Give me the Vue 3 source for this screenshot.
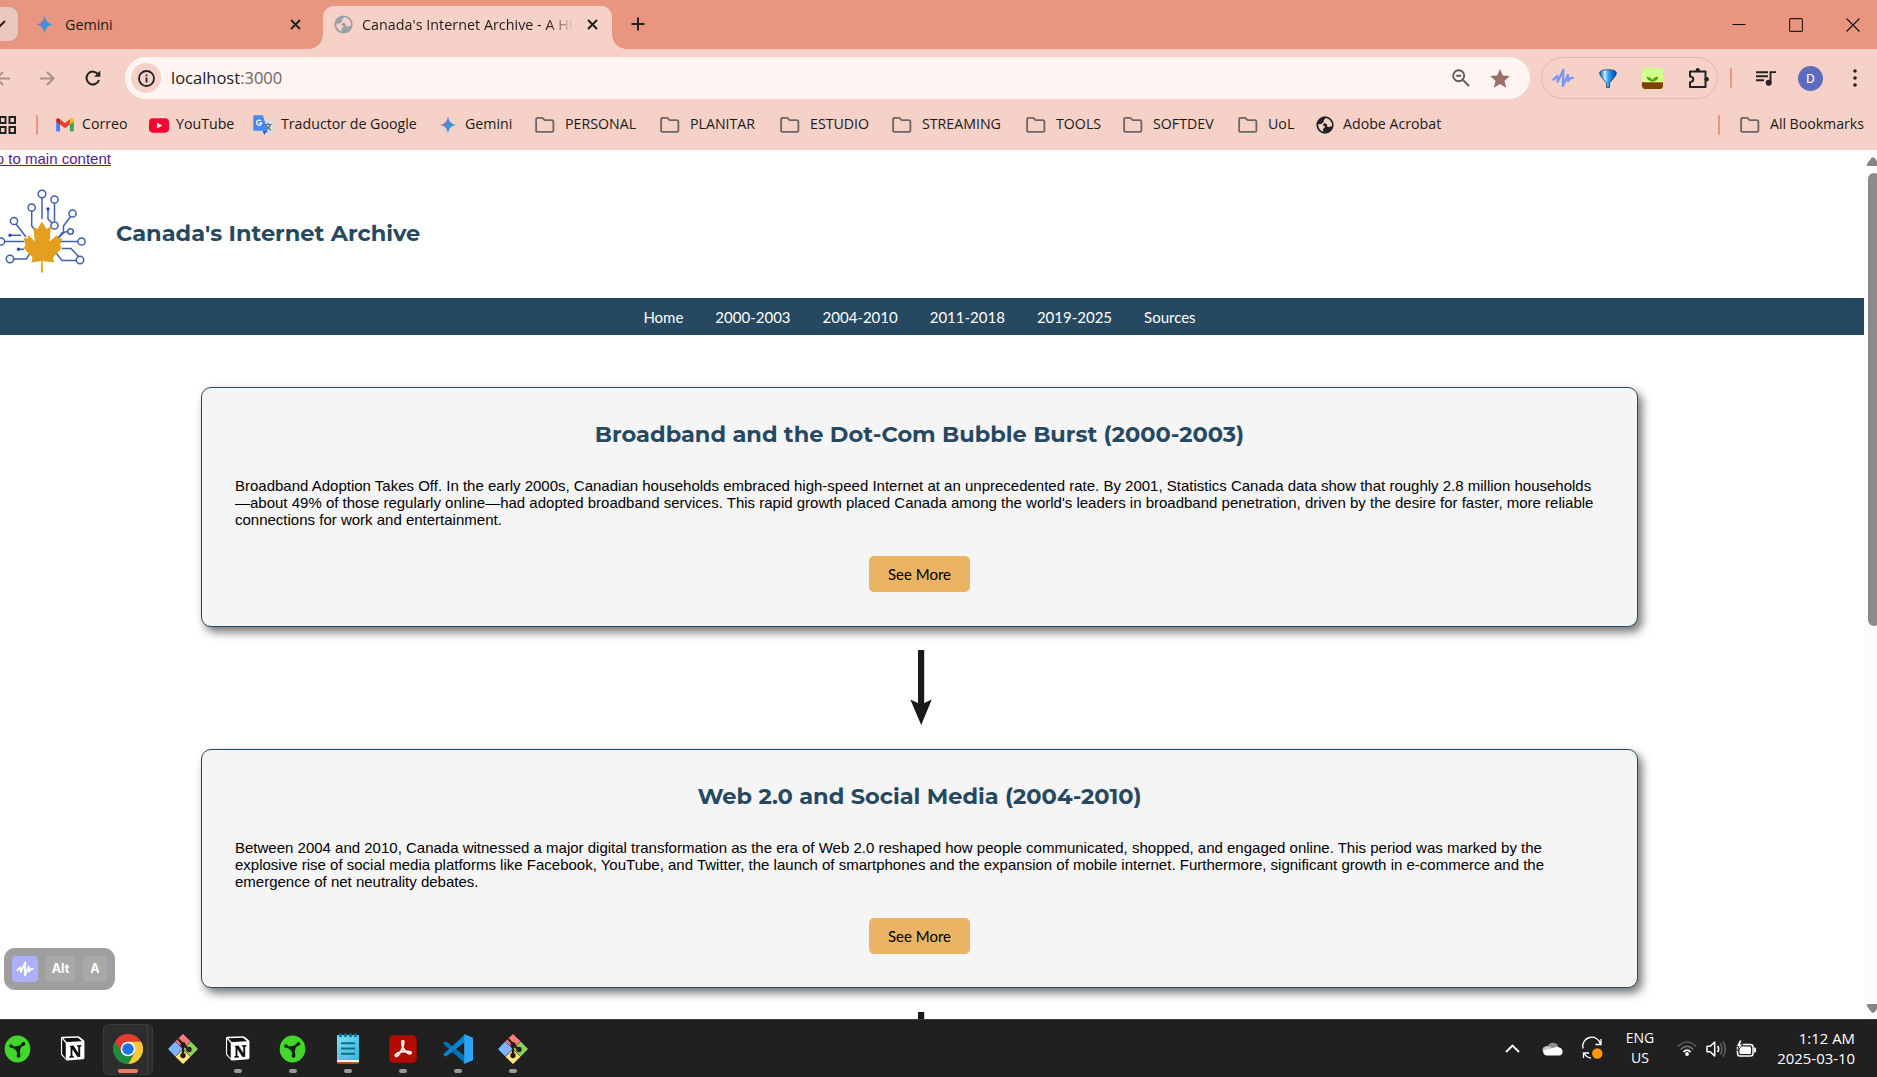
<script setup>
const bookmarks = [
  { icon: 'gmail', label: 'Correo', w: 93, gap: 8 },
  { icon: 'youtube', label: 'YouTube', w: 104, gap: 7 },
  { icon: 'translate', label: 'Traductor de Google', w: 187, gap: 7 },
  { icon: 'gemini', label: 'Gemini', w: 95, gap: 9 },
  { icon: 'folder', label: 'PERSONAL', w: 125, gap: 10 },
  { icon: 'folder', label: 'PLANITAR', w: 120, gap: 10 },
  { icon: 'folder', label: 'ESTUDIO', w: 112, gap: 10 },
  { icon: 'folder', label: 'STREAMING', w: 134, gap: 10 },
  { icon: 'folder', label: 'TOOLS', w: 97, gap: 10 },
  { icon: 'folder', label: 'SOFTDEV', w: 115, gap: 10 },
  { icon: 'folder', label: 'UoL', w: 78, gap: 10 },
  { icon: 'globe', label: 'Adobe Acrobat', w: 128, gap: 9 },
]

const navLinks = ['Home', '2000-2003', '2004-2010', '2011-2018', '2019-2025', 'Sources']

const eras = [
  {
    title: 'Broadband and the Dot-Com Bubble Burst (2000-2003)',
    text: "Broadband Adoption Takes Off. In the early 2000s, Canadian households embraced high-speed Internet at an unprecedented rate. By 2001, Statistics Canada data show that roughly 2.8 million households—about 49% of those regularly online—had adopted broadband services. This rapid growth placed Canada among the world's leaders in broadband penetration, driven by the desire for faster, more reliable connections for work and entertainment.",
  },
  {
    title: 'Web 2.0 and Social Media (2004-2010)',
    text: 'Between 2004 and 2010, Canada witnessed a major digital transformation as the era of Web 2.0 reshaped how people communicated, shopped, and engaged online. This period was marked by the explosive rise of social media platforms like Facebook, YouTube, and Twitter, the launch of smartphones and the expansion of mobile internet. Furthermore, significant growth in e-commerce and the emergence of net neutrality debates.',
  },
]

const apps = [
  { icon: 'razer' },
  { icon: 'notion' },
  { icon: 'chrome', active: true },
  { icon: 'git' },
  { icon: 'notion', open: true },
  { icon: 'razer', open: true },
  { icon: 'notepad', open: true },
  { icon: 'acrobat', open: true },
  { icon: 'vscode', open: true },
  { icon: 'git', open: true },
]
</script>

<template>
  <div class="screen">
    <svg class="defs" width="0" height="0" aria-hidden="true">
      <defs>
        <linearGradient id="gem" x1="0" y1="0.3" x2="1" y2="0.6">
          <stop offset="0" stop-color="#c56a9a" />
          <stop offset="0.35" stop-color="#6680cc" />
          <stop offset="0.7" stop-color="#279bdc" />
          <stop offset="1" stop-color="#3fa9dd" />
        </linearGradient>
        <linearGradient id="para" x1="0" y1="0" x2="1" y2="0">
          <stop offset="0" stop-color="#0a56a4" />
          <stop offset="0.32" stop-color="#c4efff" />
          <stop offset="0.5" stop-color="#3aa8f0" />
          <stop offset="0.75" stop-color="#0878d8" />
          <stop offset="1" stop-color="#083f82" />
        </linearGradient>
        <linearGradient id="grass" x1="0" y1="0" x2="0" y2="1">
          <stop offset="0" stop-color="#c8ff8c" />
          <stop offset="1" stop-color="#f4ff8a" />
        </linearGradient>
        <linearGradient id="pad" x1="0" y1="0" x2="1" y2="1">
          <stop offset="0" stop-color="#7fe0f5" />
          <stop offset="1" stop-color="#35b4d8" />
        </linearGradient>
        <symbol id="i-gemini" viewBox="0 0 18 20">
          <path fill="url(#gem)" d="M9 0c.7 5.600 3.500 9.200 9 10-5.500.8-8.300 4.400-9 10-.7-5.600-3.500-9.200-9-10 5.500-.8 8.300-4.400 9-10z" />
        </symbol>
        <symbol id="i-globe" viewBox="0 0 20 20">
          <circle cx="10" cy="10" r="9.600" fill="currentColor" />
          <path d="M11 2.200 8.500 4.700l.3 1.700-3 2.600-3.500.2c0 3.900 2 7 5.400 8.200l.2-3.300 2-1.200-.4-1.800-2.300-.9 2.400-2.300 2.800 1.600-.3 2.200 2.900.9 1.700-1.500 1.200.2c.5-4.500-2.600-8.200-6.900-9.100z" />
        </symbol>
        <symbol id="i-folder" viewBox="0 0 21 18">
          <path fill="none" stroke="#6b6769" stroke-width="1.900" stroke-linejoin="round" d="M1.200 15V3q0-1.500 1.500-1.500h5l2.400 2.400h7.500q1.700 0 1.700 1.700V15q0 1.300-1.500 1.300H2.700Q1.200 16.300 1.200 15z" />
        </symbol>
        <symbol id="i-gmail" viewBox="0 0 20 15">
          <path fill="#4285f4" d="M.2 3.500 4.500 6v8.800H1.600Q.2 14.800.2 13.400z" />
          <path fill="#34a853" d="M15.500 6l4.300-3v10.400q0 1.400-1.400 1.400h-2.900z" />
          <path fill="#fbbc04" d="M15.500 1.200l1-.8c1.500-1 3.300-.1 3.300 1.600v1.700l-4.300 3.200z" />
          <path fill="#c5221f" d="M.2 3.700V2C.2.300 2-.6 3.500.4l1 .8v5.700z" />
          <path fill="#ea4335" d="M4.500 1.200 10 5.400l5.500-4.200v5.700L10 11 4.500 6.900z" />
        </symbol>
        <symbol id="i-youtube" viewBox="0 0 21 15">
          <rect width="21" height="15" rx="4" fill="#ff0033" />
          <path fill="#fff" d="M8.300 4.400v6.200l5.600-3.100z" />
        </symbol>
        <symbol id="i-translate" viewBox="0 0 21 20">
          <rect x="8" y="4.500" width="12.500" height="15" rx="1" fill="#dadce0" />
          <path fill="none" stroke="#5f7078" stroke-width="1.200" d="M11.500 9.500h7M15 8v1.500M17.500 9.500c-.8 2.500-2.500 4.200-5 5.500M13 10c.8 2.200 2.700 4 5 5.200" />
          <path fill="#4687f4" d="M1.300.3h8.500l5 15.500H1.300Q.3 15.800.3 14.800V1.300Q.3.300 1.300.3z" />
          <path fill="#3a5bc7" d="M9.500 15.800h5.300l-3.600 4z" />
          <path fill="none" stroke="#fff" stroke-width="1.300" d="M8 6a2.500 2.500 0 1 0 .6 2.200H6.200" />
        </symbol>
        <symbol id="i-wave" viewBox="0 0 22 20">
          <path fill="none" stroke="currentColor" stroke-width="2.300" stroke-linecap="round" stroke-linejoin="round" d="M1.300 11.600 5.300 8l.4 5.800L11.400 1.800l-.6 16.200 5-11 .2 6 2.300-2.800 2.500-.3" />
        </symbol>
        <symbol id="i-razer" viewBox="0 0 28 28">
          <ellipse cx="14" cy="14" rx="13.300" ry="14" fill="#43d62c" />
          <path fill="#10240d" d="M6 9.500q3 2.300 6 1.600 4.500 0 7-3.600l2.500 1.800q-3.800 2.200-4.700 5-.8 3 .2 5.700l-3.400 1q.3-3.700-1.300-5.500-2.200-2.600-6.300-3.800z" />
          <circle cx="7.300" cy="11" r="1.900" fill="#10240d" /><circle cx="20.200" cy="8.600" r="1.900" fill="#10240d" /><circle cx="15.100" cy="21" r="2" fill="#10240d" />
        </symbol>
        <symbol id="i-notion" viewBox="0 0 26 26">
          <path fill="#fff" d="M1 2.300Q1 1 2.300.9L18.500.2q1 0 1.800.6l4.200 3.400q.9.700.9 1.800v16.500q0 1.500-1.500 1.600L8 25.500q-1.300.1-2-.9L1.600 20Q1 19.300 1 18.400z" />
          <path fill="#111" d="M2.200 3v15.200q0 .6.400 1L6 23.500V7.500L2.300 3.200zM3.300 2.400l3.400 3.500q.5.500 1.200.4L23 5.400l-3.700-3.100q-.4-.4-1-.4z" />
          <path fill="#fff" d="M7.300 7.600 24 6.700v16L7.300 23.900z" />
          <path fill="#111" d="M9.700 10.300l4.300-.3 5 7.600v-6.300l-1.400-.3V9.600l4.700-.3v1.400l-1.300.5v10.500l-2.800.2-5.300-8.200v6.800l1.500.5v1.300l-4.700.2v-1.300l1.300-.6v-9z" />
        </symbol>
        <symbol id="i-chrome" viewBox="0 0 30 30">
          <path fill="#e33b2e" d="M2 7.500A15 15 0 0 1 28 7.500H15L8.500 18.800z" />
          <path fill="#fcc934" d="M28 7.500A15 15 0 0 1 15 30l6.500-11.300L15 7.500z" />
          <path fill="#1e8e3e" d="M2 7.500A15 15 0 0 0 15 30l6.500-11.200H8.500z" />
          <circle cx="15" cy="15" r="7.300" fill="#fff" /><circle cx="15" cy="15" r="5.800" fill="#1a73e8" />
        </symbol>
        <symbol id="i-git" viewBox="0 0 30 30">
          <path fill="#ff7b7b" d="M15 0l7.500 7.200-7.500 7.300-7.500-7.300z" /><path fill="#80b3ff" d="M7.300 7.500l7.400 7.500-7.400 7.500L0 15z" />
          <path fill="#87d65a" d="M22.700 7.500 30 15l-7.300 7.500-7.400-7.500z" /><path fill="#ffe680" d="M15 15.500l7.500 7.300L15 30l-7.500-7.200z" />
          <g stroke="#2a1b17" stroke-width="2.200" fill="none"><path d="M10 5l5 5v12M15 10l6 6" /></g>
          <circle cx="15" cy="10.500" r="2.600" fill="#2a1b17" /><circle cx="15" cy="21.500" r="2.700" fill="#2a1b17" /><circle cx="21" cy="15.500" r="2.700" fill="#2a1b17" />
        </symbol>
        <symbol id="i-notepad" viewBox="0 0 22 31">
          <rect y="24" width="22" height="6.800" rx="1.200" fill="#b6620f" /><rect y="24" width="22" height="5" fill="#f4f4f4" />
          <rect y="2" width="22" height="25" rx="1" fill="url(#pad)" />
          <path stroke="#0e6a8c" stroke-width="1.900" d="M4 10.300h14M4 15.500h14M4 20.700h14" />
          <path stroke="#0c7595" stroke-width="3" stroke-linecap="round" d="M3.500 1.700v1M8.500 1.700v1M13.500 1.700v1M18.500 1.700v1" />
        </symbol>
        <symbol id="i-acrobat" viewBox="0 0 28 28">
          <rect x=".3" y=".3" width="27.400" height="27.400" rx="4.500" fill="#b30b00" />
          <path fill="none" stroke="#fff" stroke-width="1.700" stroke-linejoin="round" d="M13.600 5.800c-1.600.4-.9 4.200.5 7 1.800 3.600 5 6.500 7.200 5.900 2-.6.700-2.500-3.800-2.300-4.300.1-9.600 1.400-10.900 3.300-.9 1.400.6 2.400 2.200.9 2.500-2.400 4.900-7.700 5.700-11.300.6-2.600.2-3.800-.9-3.500z" />
        </symbol>
        <symbol id="i-vscode" viewBox="0 0 30 30">
          <path fill="#0073b7" d="M0 9.500 2 7.800q.7-.5 1.400 0L22 22v7.500z" />
          <path fill="#0a84cf" d="M0 20.500 2 22.200q.7.500 1.400 0L22 8V.5z" />
          <path fill="#2aa4f4" d="M21.500.2 30 3.800v22.400l-8.500 3.600q-.8.200-1.200-.3.900.3.900-.8V1.300q0-1.100-.9-.8.400-.5 1.200-.3z" />
        </symbol>
      </defs>
    </svg>

    <header class="browser">
      <div class="tabstrip">
        <div class="tabsearch"><svg width="12" height="8" viewBox="0 0 12 8"><path d="M1 1l5 5 5-5" fill="none" stroke="#222" stroke-width="2" /></svg></div>
        <div class="tab idle">
          <svg width="17" height="21"><use href="#i-gemini" /></svg>
          <span class="tabname">Gemini</span>
          <svg class="x" width="11" height="11" viewBox="0 0 11 11"><path d="M1 1l9 9M10 1l-9 9" stroke="#222" stroke-width="2" /></svg>
        </div>
        <div class="tab live">
          <svg class="fav" width="19" height="19"><use href="#i-globe" /></svg>
          <span class="tabname fade">Canada's Internet Archive - A Hi</span>
          <svg class="x" width="11" height="11" viewBox="0 0 11 11"><path d="M1 1l9 9M10 1l-9 9" stroke="#222" stroke-width="2" /></svg>
        </div>
        <svg class="plus" width="14" height="14" viewBox="0 0 14 14"><path d="M7 .5v13M.5 7h13" stroke="#222" stroke-width="2" /></svg>
        <div class="winctl">
          <svg width="14" height="14" viewBox="0 0 14 14"><path d="M.5 6.500h13" stroke="#111" /></svg>
          <svg width="14" height="14" viewBox="0 0 14 14"><rect x=".6" y=".6" width="12.800" height="12.800" rx="1" fill="none" stroke="#2b1c18" stroke-width="1.100" /></svg>
          <svg width="14" height="14" viewBox="0 0 14 14"><path d="M.5.5l13 13M13.500.5l-13 13" stroke="#111" stroke-width="1.100" /></svg>
        </div>
      </div>

      <div class="toolbar">
        <svg class="back" width="15" height="15" viewBox="0 0 15 15"><path d="M15 7.500H1.500M8 1 1.500 7.500 8 14" fill="none" stroke="#a88f89" stroke-width="1.900" /></svg>
        <svg class="fwd" width="15" height="15" viewBox="0 0 15 15"><path d="M0 7.500h13.500M7 1l6.500 6.500L7 14" fill="none" stroke="#a88f89" stroke-width="1.900" /></svg>
        <svg class="reload" width="16" height="16" viewBox="0 0 16 16"><path d="M14 10a6.400 6.400 0 1 1-.8-5.600" fill="none" stroke="#222" stroke-width="2" /><path d="M15.300.6v6.200H9.200z" fill="#222" /></svg>
        <div class="omnibox">
          <span class="info"><svg width="17" height="17" viewBox="0 0 17 17"><circle cx="8.500" cy="8.500" r="7.500" fill="none" stroke="#222" stroke-width="1.800" /><path d="M8.500 7.500v5M8.500 4.400v1.900" stroke="#222" stroke-width="1.800" /></svg></span>
          <span class="url">localhost<i>:3000</i></span>
          <svg class="lens" width="18" height="18" viewBox="0 0 18 18"><circle cx="6.700" cy="6.700" r="5.500" fill="none" stroke="#5f5755" stroke-width="1.900" /><path d="M4.200 6.700h5M10.800 10.800l6.200 6.200" stroke="#5f5755" stroke-width="1.900" /></svg>
          <svg class="star" width="20" height="19" viewBox="0 0 20 19"><path fill="#9a6f68" d="M10 0l2.800 6.500 7.100.6-5.400 4.700 1.600 7L10 15.100 3.900 18.800l1.600-7L.1 7.100l7.100-.6z" /></svg>
        </div>
        <div class="exts">
          <svg class="wave" width="22" height="20"><use href="#i-wave" /></svg>
          <svg width="18" height="19" viewBox="0 0 18 19"><path fill="url(#para)" stroke="#0b4180" stroke-width=".8" d="M.6 4Q1 .8 9 .7T17.400 4q0 2-3 5.500L10.500 14v4.500h-3V14L3.600 9.500Q.6 6 .6 4z" /></svg>
          <svg width="21" height="21" viewBox="0 0 21 21"><rect width="21" height="21" rx="3.500" fill="url(#grass)" /><path fill="#7a4400" d="M0 14.300h21v3.200Q21 21 17.500 21h-14Q0 21 0 17.500z" /><path fill="#48a80e" d="M10.500 13.800Q5 12.500 4.500 9q4.500-.2 6 3 1.500-3.500 6-3.300Q16 12.500 10.500 13.800z" /></svg>
          <svg width="21" height="21" viewBox="0 0 21 21"><path fill="none" stroke="#222" stroke-width="2" stroke-linejoin="round" d="M2 3.500h15.500V19H2v-4.800q3.300-.3 3.300-2.900T2 8.400z" /><circle cx="9.800" cy="2.200" r="2.100" fill="#222" /><circle cx="18.700" cy="11.300" r="2.200" fill="#222" /></svg>
        </div>
        <span class="sep s1"></span>
        <svg class="music" width="20" height="15" viewBox="0 0 20 15"><path d="M0 1.200h12M0 5.200h12M0 9.200h8M14.500 12V1.100H20" fill="none" stroke="#222" stroke-width="1.900" /><circle cx="12.700" cy="11.800" r="3" fill="#222" /></svg>
        <span class="avatar">D</span>
        <svg class="dots" width="4" height="18" viewBox="0 0 4 18"><circle cx="2" cy="2" r="1.800" fill="#222" /><circle cx="2" cy="9" r="1.800" fill="#222" /><circle cx="2" cy="16" r="1.800" fill="#222" /></svg>
      </div>

      <div class="bookmarks">
        <svg class="grid" width="17" height="18" viewBox="0 0 17 18"><g fill="none" stroke="#222" stroke-width="2"><rect x="1" y="1" width="5.500" height="6" /><rect x="10.500" y="1" width="5.500" height="6" /><rect x="1" y="11" width="5.500" height="6" /><rect x="10.500" y="11" width="5.500" height="6" /></g></svg>
        <span class="sep s2"></span>
        <a v-for="b in bookmarks" :key="b.label" class="bm" :style="{ width: b.w + 'px', columnGap: b.gap + 'px' }">
          <svg :class="['bi', b.icon]"><use :href="'#i-' + b.icon" /></svg><span>{{ b.label }}</span>
        </a>
        <span class="sep s3"></span>
        <a class="bm all"><svg class="bi folder"><use href="#i-folder" /></svg><span>All Bookmarks</span></a>
      </div>
    </header>

    <div class="viewport">
      <main class="page">
        <a class="skip" href="#main">Skip to main content</a>
        <div class="brand">
          <svg class="logo" width="87" height="90" viewBox="0 0 87 90">
            <g fill="none" stroke="#3f5fae" stroke-width="1.500">
              <circle cx="42" cy="9" r="3.800" /><path d="M42 13v21" />
              <circle cx="54.500" cy="14.500" r="3.600" /><path d="M54.500 18v18" />
              <circle cx="54.500" cy="40.500" r="3.600" /><path d="M48 24v10l4.500 4.500" />
              <circle cx="31.700" cy="22.500" r="3.600" /><path d="M31.700 26v15l4 5" />
              <circle cx="14" cy="36" r="3.600" /><path d="M16 39l10 13" />
              <circle cx="72.500" cy="28.500" r="3.600" /><path d="M70.500 31.500 63.500 41v7L57 54" />
              <circle cx="70.500" cy="46.500" r="2.800" /><path d="M67.500 46.500 62 48l-4 5" />
              <circle cx="81.500" cy="56.500" r="3.600" /><path d="M60 56.500h18" />
              <circle cx="1" cy="56.500" r="3.600" /><path d="M5 56.500h19M10 50.200h11M19 64.300h5" />
              <circle cx="10" cy="74" r="3.700" /><path d="M14 74h12.500L30 68" />
              <circle cx="80" cy="75" r="3.700" /><path d="M76.500 75.500H62L56 68M62 63.500h9L79 72" />
            </g>
            <g fill="#2e4fa3"><circle cx="48" cy="24" r="1.700" /><circle cx="10" cy="50.200" r="1.700" /><circle cx="18.500" cy="64.300" r="1.700" /></g>
            <path fill="#e39f1d" d="M42 36.500l4.500 7.500 4.500-2.500-1.500 15 7.500-6.500 1 3.500 4-.5-2 7.500 2 2.500-9 9.500 1 5-11.300-1.500.3 11.500h-2l.3-11.500L31.500 77.500l1-5-9-9.500 2-2.500-2-7.500 4 .5 1-3.500 6.500 6.500-2-15L37.500 44z" />
          </svg>
          <h1>Canada's Internet Archive</h1>
        </div>
        <nav><a v-for="n in navLinks" :key="n">{{ n }}</a></nav>
        <div class="timeline">
          <template v-for="era in eras" :key="era.title">
            <section class="card">
              <h2>{{ era.title }}</h2>
              <p>{{ era.text }}</p>
              <button>See More</button>
            </section>
            <svg class="arrow" width="22" height="75" viewBox="0 0 22 75"><path fill="#19191b" d="M8 0h6.200v53l7.600-3.500L11.200 75 .3 49.500 8 53z" /></svg>
          </template>
        </div>
      </main>
      <aside class="scroll">
        <svg width="14" height="9" viewBox="0 0 14 9"><path fill="#858585" d="M5.500.8q1.500-1.300 3 0L13 7q.7 2-1 2H2Q.3 9 1 7z" /></svg>
        <div class="thumb"></div>
        <svg class="dn" width="14" height="9" viewBox="0 0 14 9"><path fill="#858585" d="M5.500 8.200q1.500 1.300 3 0L13 2q.7-2-1-2H2Q.3 0 1 2z" /></svg>
      </aside>
      <div class="hotkey">
        <span class="key on"><svg width="20" height="16" viewBox="0 0 22 20"><use href="#i-wave" /></svg></span>
        <span class="key alt">Alt</span>
        <span class="key">A</span>
      </div>
    </div>

    <footer class="taskbar">
      <div class="apps">
        <div v-for="(a, i) in apps" :key="i" :class="['app', { active: a.active }]">
          <svg :class="['ai', a.icon]"><use :href="'#i-' + a.icon" /></svg>
          <span v-if="a.open || a.active" class="pill"></span>
        </div>
      </div>
      <div class="tray">
        <svg class="chev" width="15" height="9" viewBox="0 0 15 9"><path d="M1 8l6.500-6.500L14 8" fill="none" stroke="#fff" stroke-width="1.900" /></svg>
        <svg class="cloud" width="21" height="14" viewBox="0 0 21 14"><path fill="#8f8f8f" d="M5 9Q4.500 1 11 .8q5 .2 5.500 5z" /><path fill="#c4c4c4" d="M.5 9Q0 4.500 5 4q3-.2 6 2.500l-6 5z" /><path fill="#fff" d="M1 9.500q1-2 4-2l6-1.500q3-1.500 5.500-.7Q20.500 6 20.600 9.500 20.500 13.300 17 13.500H4.500Q1.500 13 1 9.500z" /></svg>
        <svg class="sync" width="21" height="22" viewBox="0 0 21 22"><path d="M1 10.500A9 9 0 0 1 18.500 6M19 1v5.500h-5.500M1.500 20v-5H7M2 15q2 4.500 7 5" fill="none" stroke="#fff" stroke-width="1.300" /><circle cx="15.300" cy="15.500" r="5.200" fill="#ff9800" /></svg>
        <div class="lang"><span>ENG</span><span>US</span></div>
        <svg class="wifi" width="20" height="15" viewBox="0 0 20 15"><g fill="none" stroke-width="1.400"><path stroke="#5a5a5a" d="M.8 5.600Q10-3.600 19.200 5.600" /><path stroke="#777" d="M3.700 8.500Q10 2 16.300 8.500" /><path stroke="#fff" stroke-width="1.700" d="M6.300 11q3.700-3.700 7.400 0" /></g><circle cx="10" cy="13" r="1.900" fill="#fff" /></svg>
        <svg class="vol" width="21" height="18" viewBox="0 0 21 18"><path fill="none" stroke="#fff" stroke-width="1.500" stroke-linejoin="round" d="M1 6.300h3.200L8.700 2v14l-4.500-4.300H1zM11.700 5.800q2 3.200 0 6.400" /><path fill="none" stroke="#666" stroke-width="1.400" d="M14.200 3.500q3.600 5.500 0 11M16.800 1.300q5 7.700 0 15.400" /></svg>
        <svg class="bat" width="21" height="18" viewBox="0 0 21 18"><rect x="1.500" y="4.500" width="15.500" height="11.500" rx="2.500" fill="none" stroke="#fff" stroke-width="1.500" /><rect x="3.500" y="6.500" width="11.500" height="7.500" rx="1" fill="#fff" /><path fill="#fff" d="M18 7.500h1.300q.9 1 .9 2.500t-.9 2.500H18z" /><path fill="#fff" stroke="#202020" stroke-width=".9" d="M3.500 0 .3 6.500h2.400L1.600 11 6.800 4.300H4.500L6 0z" /></svg>
        <div class="clock"><span>1:12 AM</span><span>2025-03-10</span></div>
      </div>
    </footer>
  </div>
</template>

<style>
body { margin: 0; }
</style>

<style scoped>
.screen { width: 1877px; height: 1077px; overflow: hidden; display: flex; flex-direction: column; background: #fff; font-family: "Open Sans", "Noto Sans", sans-serif; color: #201b1a; }
.defs { position: absolute; }
svg { display: block; flex: none; overflow: visible; }
.browser { flex: none; height: 150px; background: #f5d1c8; }

.tabstrip { height: 49px; background: #e8967f; display: flex; align-items: flex-start; }
.tabsearch { width: 18px; height: 34px; margin-top: 7px; background: #e9c6be; border-radius: 0 9px 9px 0; display: flex; align-items: center; }
.tabsearch svg { margin-left: -6px; }
.tab { display: flex; align-items: center; font-size: 14.300px; box-sizing: border-box; }
.idle { width: 305px; height: 36px; margin-top: 6px; padding: 0 22.500px 0 18px; }
.idle .tabname { margin-left: 12px; flex: 1; }
.live { width: 289px; height: 43px; margin-top: 6px; padding: 0 14px 6px 11px; background: #f5d1c8; border-radius: 11px 11px 0 0; position: relative; }
.live::before, .live::after { content: ""; position: absolute; bottom: 0; width: 14px; height: 14px; }
.live::before { left: -14px; background: radial-gradient(circle at 0 0, transparent 13.500px, #f5d1c8 14px); }
.live::after { right: -14px; background: radial-gradient(circle at 100% 0, transparent 13.500px, #f5d1c8 14px); }
.tabname { white-space: nowrap; }
.fade { width: 210px; margin-left: 9px; margin-right: 15px; letter-spacing: .03px; -webkit-mask-image: linear-gradient(90deg, #000 185px, transparent 212px); mask-image: linear-gradient(90deg, #000 185px, transparent 212px); }
.fav { color: #98a1a7; fill: #f5d1c8; }
.globe { fill: #f5d1c8; color: #202124; }
.plus { margin: 17px 0 0 19px; }
.winctl { margin: 18px 17px 0 auto; display: flex; gap: 43px; }

.toolbar { height: 58px; display: flex; align-items: center; }
.back { margin-left: -5px; }
.fwd { margin-left: 30px; }
.reload { margin-left: 30px; }
.omnibox { margin-left: 24px; width: 1405px; height: 42px; border-radius: 21px; background: #fff4f2; display: flex; align-items: center; box-sizing: border-box; padding-left: 6px; }
.info { width: 30px; height: 30px; border-radius: 50%; background: #f5d1c8; display: flex; align-items: center; justify-content: center; }
.url { font-size: 16.500px; margin-left: 10px; flex: 1; padding-bottom: 1px; }
.url i { font-style: normal; color: #6f6563; }
.lens { margin-right: 20px; }
.star { margin-right: 20px; }
.exts { margin-left: 11px; width: 177px; height: 42px; box-sizing: border-box; border: 1px solid #e3bcb3; border-radius: 21px; display: flex; align-items: center; padding-left: 10px; }
.exts svg + svg { margin-left: 25px; }
.wave { color: #7b96f5; }
.sep { width: 2px; height: 20px; border-radius: 1px; background: #e8967f; }
.s1 { margin-left: 12px; }
.music { margin-left: 24px; }
.avatar { width: 25px; height: 25px; border-radius: 50%; background: #5c6bc0; color: #fff; font: 13.500px/25px Roboto, sans-serif; text-align: center; margin-left: 22px; }
.dots { margin-left: 30px; }

.bookmarks { height: 36px; display: flex; align-items: center; font-size: 14.200px; }
.grid { margin-left: -1px; }
.s2 { margin: 0 18px 0 20px; }
.bm { display: flex; align-items: center; white-space: nowrap; flex: none; }
.bm span { line-height: 18px; padding-bottom: 2px; }
.bi { width: 20px; height: 18px; }
.bi.gmail { width: 18px; height: 14px; }
.bi.youtube { width: 20px; height: 15px; }
.bi.translate { width: 21px; height: 20px; }
.bi.gemini { width: 16px; height: 18px; }
.bi.globe { width: 18px; height: 18px; }
.s3 { margin-left: auto; margin-right: 20px; }
.all { width: 137px; column-gap: 10px; letter-spacing: -.05px; }

.viewport { position: relative; height: 869px; display: flex; overflow: hidden; font-family: "Liberation Sans", Arial, sans-serif; }
.page { width: 1889px; margin-left: -25px; height: 869px; flex: none; overflow: hidden; }
.skip { display: block; height: 17px; font-size: 15px; line-height: 17px; color: #551a8b; text-decoration: underline; }
.brand { display: flex; height: 131px; padding-left: 25px; }
.logo { margin-top: 18px; }
h1, h2 { margin: 0; color: #264961; font: bold 22.500px/28px Montserrat, Inter, sans-serif; }
h1 { margin: 52px 0 0 29px; }
nav { height: 37px; background: #264961; color: #fff; display: flex; justify-content: center; align-items: center; gap: 32px; font: 15px/18px Lato, sans-serif; }
.timeline { display: flex; flex-direction: column; align-items: center; padding-top: 52px; }
.card { width: 1437px; height: 239.500px; flex: none; box-sizing: border-box; border: 1px solid #264961; border-radius: 10px; background: #f5f5f5; box-shadow: 4px 5px 10px rgba(0, 0, 0, .55); padding: 32px 33px 0; display: flex; flex-direction: column; align-items: center; }
.card p { margin: 29px 0 0; align-self: stretch; font-size: 15px; line-height: 17px; color: #000; }
button { margin-top: 28px; width: 101px; height: 36px; padding: 0; border: 0; border-radius: 5px; background: #eab464; color: #000; font: 15px/18px Lato, sans-serif; }
.arrow { margin: 23.500px 0 23.700px 3px; }

.scroll { position: absolute; right: 0; top: 0; width: 13px; height: 869px; background: #fcfcfc; display: flex; flex-direction: column; overflow: hidden; }
.scroll svg { margin: 7px 0 0 2px; }
.thumb { width: 12px; height: 453px; margin: 7px 0 0 4px; border-radius: 6px; background: #8b8b8b; flex: none; }
.scroll .dn { margin-top: auto; margin-bottom: 6px; }

.hotkey { position: absolute; left: 4px; top: 798px; width: 111px; height: 42px; border-radius: 11px; background: #9f9f9f; display: flex; align-items: center; box-sizing: border-box; padding-left: 8px; gap: 8px; }
.key { width: 24px; height: 26px; border-radius: 4px; background: #a8a8a8; color: #fff; font: bold 12.500px/26px Inter, sans-serif; display: flex; align-items: center; justify-content: center; }
.key.on { width: 26px; background: #acb0fb; }
.key.alt { width: 29px; }

.taskbar { height: 58px; flex: none; background: #202020; border-top: 1px solid #3c3f3e; box-sizing: border-box; display: flex; justify-content: space-between; color: #fff; }
.apps { display: flex; margin-left: -10px; }
.app { width: 55px; height: 57px; position: relative; display: flex; align-items: center; justify-content: center; }
.app.active::before { content: ""; position: absolute; left: 3px; top: 4px; width: 50px; height: 51px; border-radius: 5px; background: #2d2d2d; box-sizing: border-box; border: 1px solid #383838; }
.app.active::after { content: ""; position: absolute; left: 3px; top: 4px; width: 45px; height: 51px; border-radius: 5px; box-sizing: border-box; border-right: 1px solid #434343; }
.ai { position: relative; }
.ai.razer { width: 27px; height: 28px; }
.ai.notion { width: 25px; height: 27px; }
.ai.chrome, .ai.git, .ai.vscode { width: 30px; height: 30px; }
.ai.notepad { width: 22px; height: 31px; }
.ai.acrobat { width: 28px; height: 28px; }
.pill { position: absolute; bottom: 4px; left: 23.500px; width: 8px; height: 4px; border-radius: 2px; background: #9a9a9a; }
.active .pill { left: 17.500px; width: 20px; background: #f37b63; z-index: 1; }
.tray { display: flex; align-items: center; padding-right: 22px; font-size: 14.900px; line-height: 20px; }
.tray > div { padding-bottom: 1px; }
.cloud { margin-left: 22px; }
.sync { margin-left: 19px; }
.lang { margin-left: 22px; width: 30px; display: flex; flex-direction: column; align-items: center; font-size: 14px; }
.wifi { margin-left: 22px; }
.vol { margin-left: 9px; }
.bat { margin-left: 9px; }
.clock { margin-left: 19px; width: 79px; display: flex; flex-direction: column; align-items: flex-end; white-space: nowrap; }
</style>
